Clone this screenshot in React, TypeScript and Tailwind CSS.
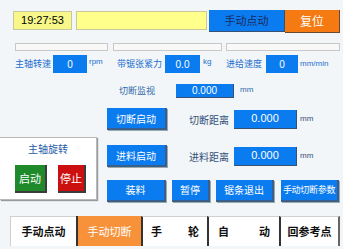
import React from "react";

const font = { fontFamily: '"Noto Sans CJK SC", "Noto Sans", sans-serif' };
const latin = { fontFamily: '"Liberation Sans", "Noto Sans", sans-serif' };

function BlueBtn({ label, w, small }: { label: string; w: string; small?: boolean }) {
  return (
    <div
      className={`${w} h-[22px] bg-[#0b7cf0] text-white ${small ? "text-[9px] tracking-[-0.3px]" : "text-[10px]"} whitespace-nowrap flex items-center justify-center border-b-2 border-r-2 border-[#3a5f8a] shadow-[1px_1px_0_#9aa]`}
    >
      {label}
    </div>
  );
}

export default function App() {
  return (
    <div className="w-[343px] h-[249px] bg-[#f2f6f8] overflow-hidden flex flex-col whitespace-nowrap" style={font}>
      {/* top row */}
      <div className="flex items-start pt-[10px]">
        <div className="ml-[13px] mt-[1px] w-[59px] h-[19px] bg-[#f7f78a] border border-[#c8c8a0] text-[11px] text-black flex items-center justify-center" style={latin}>
          19:27:53
        </div>
        <div className="ml-[4px] mt-[1px] w-[131px] h-[19px] bg-[#ffff8c] border border-[#c8c89a]" />
        <div className="ml-[2px] w-[76px] h-[22px] bg-[#0b7cf0] border-b border-r border-[#3a5070] text-[#1a2a60] text-[11px] flex items-center justify-center">
          手动点动
        </div>
        <div className="w-[55px] h-[23px] bg-[#f57a12] border-b border-r border-[#6a4a30] text-white text-[12px] flex items-center justify-center">
          复位
        </div>
      </div>

      {/* progress bars */}
      <div className="flex mt-[10px] h-[8px]">
        <div className="ml-[15px] w-[93px] h-[8px] bg-[#f8f8f6] border border-[#c8c8c8]" />
        <div className="ml-[5px] w-[109px] h-[8px] bg-[#f8f8f6] border border-[#c8c8c8]" />
        <div className="ml-[4px] w-[114px] h-[8px] bg-[#f8f8f6] border border-[#c8c8c8]" />
      </div>

      {/* value row */}
      <div className="flex items-center mt-[4px] h-[18px] text-[9px] text-[#1b6ed0]">
        <div className="ml-[15px] w-[38px]">主轴转速</div>
        <div className="w-[34px] h-[18px] bg-[#0b7cf0] text-white text-[10px] flex items-center justify-center" style={latin}>0</div>
        <div className="ml-[2px] w-[28px] text-[8px] -mt-[4px]" style={latin}>rpm</div>
        <div className="w-[48px]">带锯张紧力</div>
        <div className="w-[35px] h-[18px] bg-[#0b7cf0] text-white text-[10px] flex items-center justify-center" style={latin}>0.0</div>
        <div className="ml-[3px] w-[23px] text-[8px] -mt-[4px]" style={latin}>kg</div>
        <div className="w-[40px]">进给速度</div>
        <div className="w-[32px] h-[18px] bg-[#0b7cf0] text-white text-[10px] flex items-center justify-center" style={latin}>0</div>
        <div className="ml-[2px] text-[8px]" style={latin}>mm/min</div>
      </div>

      {/* 切断监视 row */}
      <div className="flex items-center mt-[11px] h-[14px]">
        <div className="ml-[119px] w-[57px] text-[9px] text-[#2f6aaa]">切断监视</div>
        <div className="w-[58px] h-[14px] bg-[#0b7cf0] border-b border-r border-[#3a5070] text-white text-[10px] flex items-center justify-center" style={latin}>0.000</div>
        <div className="ml-[6px] text-[8px] text-[#2f6aaa] -mt-[3px]" style={latin}>mm</div>
      </div>

      {/* main area */}
      <div className="flex mt-[10px]">
        <div className="w-[107px] flex flex-col">
          <div className="mt-[29px] w-[97px] h-[63px] bg-white border-t border-r border-b border-[#b8b8b8] shadow-[1px_1px_1px_#999] flex flex-col">
            <div className="text-center text-[10px] text-[#1e5aa8] mt-[3px]">主轴旋转</div>
            <div className="flex mt-[9px]">
              <div className="ml-[15px] w-[32px] h-[28px] bg-[#1e8a2a] border-b-2 border-r-2 border-[#3c3c3c] text-white text-[11px] flex items-center justify-center">启动</div>
              <div className="ml-[11px] w-[28px] h-[28px] bg-[#cc1010] border-b-2 border-r-2 border-[#3c3c3c] text-white text-[11px] flex items-center justify-center">停止</div>
            </div>
          </div>
        </div>
        <div className="flex flex-col">
          <div className="flex items-center h-[22px]">
            <BlueBtn label="切断启动" w="w-[60px]" />
            <div className="ml-[22px] w-[45px] text-[10px] text-[#33507a]">切断距离</div>
            <div className="w-[63px] h-[19px] bg-[#0b7cf0] border-b border-r border-[#3a5070] text-white text-[11px] flex items-center justify-center" style={latin}>0.000</div>
            <div className="ml-[3px] text-[8px] text-[#33507a]" style={latin}>mm</div>
          </div>
          <div className="flex items-center h-[22px] mt-[15px]">
            <BlueBtn label="进料启动" w="w-[60px]" />
            <div className="ml-[22px] w-[45px] text-[10px] text-[#33507a]">进料距离</div>
            <div className="w-[63px] h-[19px] bg-[#0b7cf0] border-b border-r border-[#3a5070] text-white text-[11px] flex items-center justify-center" style={latin}>0.000</div>
            <div className="ml-[3px] text-[8px] text-[#33507a]" style={latin}>mm</div>
          </div>
          <div className="flex items-center mt-[12px] h-[23px]">
            <BlueBtn label="装料" w="w-[59px]" />
            <div className="ml-[6px]"><BlueBtn label="暂停" w="w-[38px]" /></div>
            <div className="ml-[6px]"><BlueBtn label="锯条退出" w="w-[58px]" /></div>
            <div className="ml-[7px]"><BlueBtn label="手动切断参数" w="w-[58px]" small /></div>
          </div>
        </div>
      </div>

      {/* tabs */}
      <div className="flex mt-[14px] h-[30px] text-[11px] font-bold text-[#111]">
        <div className="ml-[10px] w-[66px] h-[30px] bg-white border-t border-l border-[#d0d0d0] flex items-center justify-center">手动点动</div>
        <div className="w-[65px] h-[30px] bg-[#f7913a] border-l-2 border-[#333] text-white font-normal flex items-center justify-center">手动切断</div>
        <div className="w-[66px] h-[30px] bg-white border-t border-[#d0d0d0] border-l-2 border-l-[#333] flex items-center justify-center gap-[26px]"><span>手</span><span>轮</span></div>
        <div className="w-[72px] h-[30px] bg-white border-t border-[#d0d0d0] border-l-2 border-l-[#333] flex items-center justify-center gap-[30px]"><span>自</span><span>动</span></div>
        <div className="w-[61px] h-[30px] bg-white border-t border-[#d0d0d0] border-l-2 border-l-[#333] border-r-2 border-r-[#666] flex items-center justify-center">回参考点</div>
      </div>
    </div>
  );
}
